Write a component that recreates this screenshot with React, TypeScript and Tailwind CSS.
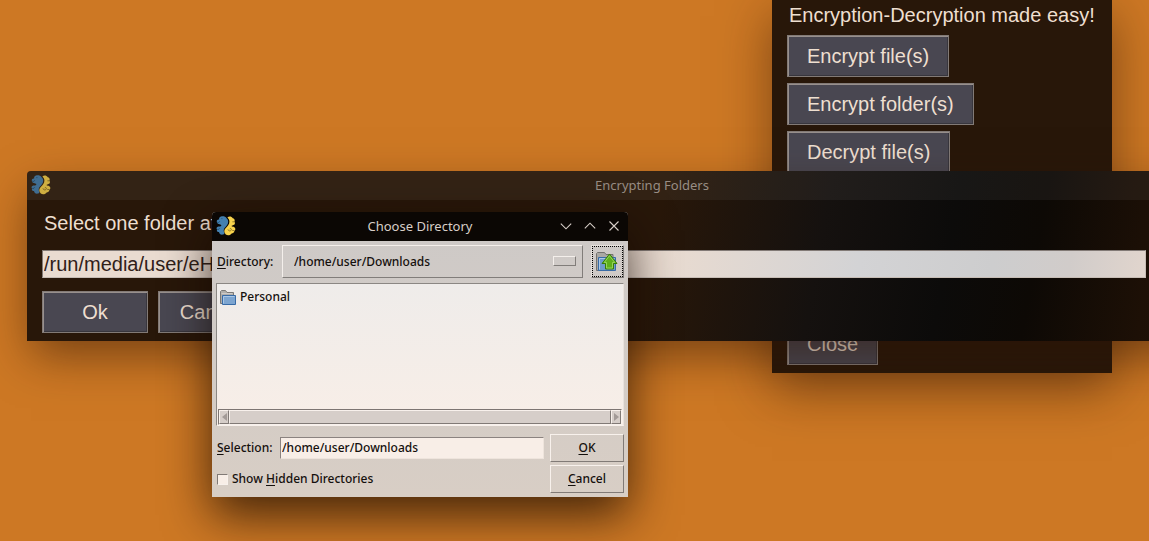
import type { ReactNode } from "react";

function SnakeIcon({ dim = false }: { dim?: boolean }) {
  return (
    <svg viewBox="0 0 20 20" className={dim ? "h-5 w-5 opacity-80" : "h-5 w-5"} aria-hidden="true">
      <path
        d="M10.6 2.2C9.4.4 7 0 5 .6C3.4 1 2.8 2.2 3.2 3.6C1.4 3.4.4 4.6.9 6.2C1.2 7.4 2.4 8 3.6 8.2L5.4 9C5.2 10.4 3.6 10.8 2.4 10.4C.6 10.8 0 12.2 1 13.4C.4 15 1.6 16.2 3 16C3.2 17.8 4.6 18.8 6.4 18.6C8 18.8 8.8 17.8 8.2 16.6C7.4 14.8 7.6 13.2 8.8 11.8C10.4 10 12.2 8.4 12.2 5.8C12.2 4.2 11.6 3.2 10.6 2.2Z"
        fill="#4480b0"
      />
      <path
        d="M11.4 1.4C13-.1 15.6.2 16.8 2.2C18.4 2.6 19.2 4 18.4 5.6C19.4 7.2 18.8 8.6 17.4 9L15.4 10C16.2 10.8 17.6 10.6 18.4 11.2C19.8 12.4 19.6 14 18.4 14.8C18.4 16.6 16.8 17.4 15.6 17.4C14.6 19.2 11.6 19.8 9.8 18.4C7.6 16.6 8 13.8 9.8 12C11.8 10 13.4 8.6 13.4 5.6C13.4 3.8 12.6 2.6 11.4 1.4Z"
        fill="#f8d34d"
      />
      <path d="M5.4 2.6h1M1.2 6.2C2.6 6.8 3.6 6.2 3.6 5.4M1.2 13.4C2.6 13.8 3.6 13 3.4 12.2" fill="none" stroke="#1d496b" strokeWidth="0.8" />
      <path d="M12 13.4C12.2 15.4 15.4 15.4 15.4 13.4C15.2 12.2 13.8 12.4 13.8 13.2M16.4 5.8L18.4 5.8M16.2 14.4L18.2 14.6" fill="none" stroke="#7b6521" strokeWidth="0.8" />
    </svg>
  );
}

function FolderIcon() {
  return (
    <svg viewBox="0 0 16 15" className="h-[15px] w-4" aria-hidden="true">
      <path d="M.5 13.5V1.5L1.5.5H5.5L7 2.5H13.5V13.5Z" fill="#b0aeaa" stroke="#7b7976" />
      <path d="M1.5 3.5H12.5" stroke="#cecbc8" />
      <path d="M2.5 5.5H15.5V14.5H2.5Z" fill="#7da5d0" stroke="#386ba6" />
      <path d="M3.5 13.5V6.5H14.5" fill="none" stroke="#aac7e6" />
    </svg>
  );
}

function FolderUpIcon() {
  return (
    <svg viewBox="0 0 22 20" className="h-5 w-[22px]" aria-hidden="true">
      <path d="M.5 18.5V1.5L1.5.5H8.5L10 2.5H17V18.5Z" fill="#aaa8a4" stroke="#73716e" />
      <path d="M2.5 5.5H19.5V18.5H2.5Z" fill="#6f9bcb" stroke="#386ba6" />
      <path d="M3.5 17.5V6.5H18.5" fill="none" stroke="#aac7e6" />
      <path d="M13.5 2L21 11.5H17.5V17H9.5V11.5H6Z" fill="#5eaf1b" stroke="#377b08" strokeLinejoin="round" />
      <path d="M13.5 3.8L18.8 10.5H16.5V16H10.5V10.5H8.2Z" fill="none" stroke="#95d65a" />
    </svg>
  );
}

function DarkButton({ children, className = "" }: { children: ReactNode; className?: string }) {
  return (
    <button
      type="button"
      className={`h-[42px] shrink-0 border border-[#827a76] bg-[#494751] px-[19px] text-xl leading-6 text-[#eedfd0] shadow-[inset_1px_1px_0_#98908d,inset_-1px_-1px_0_#38363d] ${className}`}
    >
      {children}
    </button>
  );
}

function LightButton({ children }: { children: ReactNode }) {
  return (
    <button
      type="button"
      className="h-7 border border-t-[#f8f1ec] border-r-[#817a76] border-b-[#817a76] border-l-[#f8f1ec]"
    >
      {children}
    </button>
  );
}

function LauncherWindow() {
  return (
    <section className="absolute top-0 left-[772px] flex h-[373px] w-[340px] flex-col items-start bg-[#281709] px-[15px] pb-2 font-['Liberation_Sans',sans-serif] shadow-[0_16px_48px_0_rgba(45,20,5,0.5)]">
      <p className="mb-2 pt-[3px] pl-0.5 text-xl leading-6 whitespace-nowrap text-[#eedfd0]">
        Encryption-Decryption made easy!
      </p>
      <div className="flex flex-col items-start gap-1.5">
        <DarkButton>Encrypt file(s)</DarkButton>
        <DarkButton>Encrypt folder(s)</DarkButton>
        <DarkButton>Decrypt file(s)</DarkButton>
      </div>
      <DarkButton className="mt-auto">Close</DarkButton>
    </section>
  );
}

function FoldersWindow() {
  return (
    <section className="absolute top-[171px] right-[-128px] left-[27px] overflow-hidden rounded-t bg-[#281709] bg-[linear-gradient(100deg,transparent_50%,#15110f_63%,#0c0b0a_73%,#0d0905_80%,#1d1006_89%,#281709_100%)] font-['Liberation_Sans',sans-serif] shadow-[0_18px_44px_-4px_rgba(45,20,5,0.55)]">
      <header className="relative flex h-[29px] items-center justify-center bg-white/5 pb-0.5">
        <span className="absolute top-1 left-1">
          <SnakeIcon dim />
        </span>
        <h2 className="font-['Noto_Sans',sans-serif] text-[13px] leading-4 text-[#988d84]">Encrypting Folders</h2>
      </header>
      <form className="pr-[131px] pb-2 pl-[15px]" onSubmit={(e) => e.preventDefault()}>
        <label htmlFor="folder-path" className="block pt-[11px] pl-0.5 text-xl leading-6 text-[#eedfd0]">
          Select one folder at
        </label>
        <input
          id="folder-path"
          defaultValue="/run/media/user/eH"
          className="mt-[15px] block h-7 w-full border border-t-[#827a76] border-r-[#c7bdb5] border-b-[#c7bdb5] border-l-[#827a76] bg-[#e9dbd0] bg-[linear-gradient(100deg,transparent_56%,#d3d3d5_74%,#cdcdce_86%,#d1ccca_93%,#e1d5cd_100%)] px-px text-xl leading-6 text-[#302019] outline-none"
        />
        <div className="mt-[13px] flex gap-2.5">
          <DarkButton className="w-[106px]">Ok</DarkButton>
          <DarkButton className="w-[106px]">Cancel</DarkButton>
        </div>
      </form>
    </section>
  );
}

function DirectoryDialog() {
  return (
    <section
      role="dialog"
      aria-labelledby="dialog-title"
      className="absolute top-[212px] left-[212px] w-[416px] overflow-hidden rounded-t bg-linear-to-b from-[#cdc9c7] to-[#d8cec5] font-['Noto_Sans',sans-serif] text-xs font-medium text-[#15100d] shadow-[0_18px_48px_0_rgba(20,8,0,0.75)]"
    >
      <header className="relative flex h-[29px] items-center justify-center bg-[#0b0704] pb-0.5 text-[#d8cfc8]">
        <span className="absolute top-1 left-1">
          <SnakeIcon />
        </span>
        <h2 id="dialog-title" className="text-[13px] leading-4 font-normal">
          Choose Directory
        </h2>
        <div className="absolute top-2 right-2 flex gap-3">
          <button type="button" aria-label="Minimize">
            <svg viewBox="0 0 12 12" className="h-3 w-3">
              <path d="M.8 3.6L6 8.8L11.2 3.6" fill="none" stroke="currentColor" strokeWidth="1.1" />
            </svg>
          </button>
          <button type="button" aria-label="Maximize">
            <svg viewBox="0 0 12 12" className="h-3 w-3">
              <path d="M.8 8.4L6 3.2L11.2 8.4" fill="none" stroke="currentColor" strokeWidth="1.1" />
            </svg>
          </button>
          <button type="button" aria-label="Close">
            <svg viewBox="0 0 12 12" className="h-3 w-3">
              <path d="M1.5 1.5L10.5 10.5M10.5 1.5L1.5 10.5" fill="none" stroke="currentColor" strokeWidth="1.1" />
            </svg>
          </button>
        </div>
      </header>
      <form className="p-1" onSubmit={(e) => e.preventDefault()}>
        <div className="flex h-[33px] items-center">
          <label htmlFor="directory" className="w-[66px] pl-px">
            <u className="underline-offset-2">D</u>irectory:
          </label>
          <div className="relative h-full flex-1 border border-t-[#f4efeb] border-r-[#817d7a] border-b-[#817d7a] border-l-[#f4efeb]">
            <select id="directory" className="h-full w-full appearance-none bg-transparent pl-[11px] outline-none">
              <option>/home/user/Downloads</option>
            </select>
            <span className="pointer-events-none absolute top-2.5 right-1.5 h-2.5 w-[23px] border border-t-[#f4efeb] border-r-[#817d7a] border-b-[#817d7a] border-l-[#f4efeb]" />
          </div>
          <button
            type="button"
            aria-label="Parent directory"
            className="ml-2 flex h-full w-[33px] items-center justify-center border border-t-[#e6e1dd] border-r-[#817d7a] border-b-[#817d7a] border-l-[#e6e1dd] pr-0.5 outline-1 -outline-offset-2 outline-black outline-dotted"
          >
            <FolderUpIcon />
          </button>
        </div>
        <div className="mt-[5px] flex h-[143px] flex-col border border-t-[#8b8783] border-r-[#e9e2dd] border-b-[#f8f1ec] border-l-[#8b8783] bg-linear-to-b from-[#efecea] to-[#f8eee7]">
          <ul className="flex-1 pt-1 pl-[3px]">
            <li className="flex items-center gap-1 leading-[18px]">
              <FolderIcon />
              Personal
            </li>
          </ul>
          <div className="mx-px flex h-4 border border-t-[#7d7572] border-r-[#f8f1ec] border-b-[#f8f1ec] border-l-[#7d7572] bg-[#d6cec9]" aria-hidden="true">
            <span className="flex w-2.5 items-center justify-center border border-t-[#f8f1ec] border-r-[#817a76] border-b-[#817a76] border-l-[#f8f1ec]">
              <svg viewBox="0 0 5 8" className="h-2 w-[5px]">
                <path d="M5 0V8L0 4Z" fill="#a39b97" />
              </svg>
            </span>
            <span className="flex-1 border border-t-[#f8f1ec] border-r-[#817a76] border-b-[#817a76] border-l-[#f8f1ec]" />
            <span className="flex w-2.5 items-center justify-center border border-t-[#f8f1ec] border-r-[#817a76] border-b-[#817a76] border-l-[#f8f1ec]">
              <svg viewBox="0 0 5 8" className="h-2 w-[5px]">
                <path d="M0 0V8L5 4Z" fill="#a39b97" />
              </svg>
            </span>
          </div>
        </div>
        <div className="mt-2 grid grid-cols-[1fr_74px] items-center gap-x-1.5 gap-y-[3px]">
          <div className="flex items-center">
            <label htmlFor="selection" className="w-16 pl-px">
              <u className="underline-offset-2">S</u>election:
            </label>
            <input
              id="selection"
              defaultValue="/home/user/Downloads"
              className="h-[22px] min-w-0 flex-1 border border-t-[#8b8380] border-r-[#eee4dc] border-b-[#eee4dc] border-l-[#8b8380] bg-[#f8eee7] px-px pb-0.5 outline-none"
            />
          </div>
          <LightButton>
            <u className="underline-offset-2">O</u>K
          </LightButton>
          <label className="flex items-center gap-1 pl-px">
            <input
              type="checkbox"
              className="h-[11px] w-[11px] appearance-none border border-t-[#817a76] border-r-[#f8f1ec] border-b-[#f8f1ec] border-l-[#817a76] bg-[#f8eee7]"
            />
            <span>
              Show <u className="underline-offset-2">H</u>idden Directories
            </span>
          </label>
          <LightButton>
            <u className="underline-offset-2">C</u>ancel
          </LightButton>
        </div>
      </form>
    </section>
  );
}

export default function App() {
  return (
    <main className="relative h-screen overflow-hidden bg-[#cd7824]">
      <LauncherWindow />
      <FoldersWindow />
      <DirectoryDialog />
    </main>
  );
}
